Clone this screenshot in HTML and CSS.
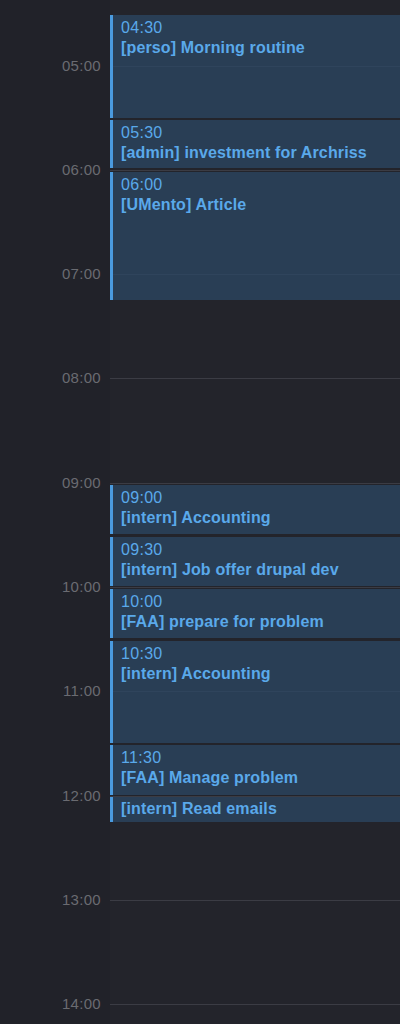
FILE: index.html
```html
<!DOCTYPE html>
<html>
<head>
<meta charset="utf-8">
<link rel="stylesheet" href="styles.css">
</head>
<body>
<div class="day">
  <div class="row first"><div class="label"></div><div class="slot"></div></div>
  <div class="row"><div class="label"><span>05:00</span></div><div class="slot"></div></div>
  <div class="row"><div class="label"><span>06:00</span></div><div class="slot"></div></div>
  <div class="row"><div class="label"><span>07:00</span></div><div class="slot"></div></div>
  <div class="row"><div class="label"><span>08:00</span></div><div class="slot"></div></div>
  <div class="row"><div class="label"><span>09:00</span></div><div class="slot"></div></div>
  <div class="row"><div class="label"><span>10:00</span></div><div class="slot"></div></div>
  <div class="row"><div class="label"><span>11:00</span></div><div class="slot"></div></div>
  <div class="row"><div class="label"><span>12:00</span></div><div class="slot"></div></div>
  <div class="row"><div class="label"><span>13:00</span></div><div class="slot"></div></div>
  <div class="row last"><div class="label"><span>14:00</span></div><div class="slot"></div></div>

  <div class="events">
    <div class="event" style="top:15px;height:103px"><div class="time">04:30</div><div class="title">[perso] Morning routine</div></div>
    <div class="event" style="top:120px;height:48px"><div class="time">05:30</div><div class="title">[admin] investment for Archriss</div></div>
    <div class="event" style="top:172px;height:128px"><div class="time">06:00</div><div class="title">[UMento] Article</div></div>
    <div class="event" style="top:485px;height:49px"><div class="time">09:00</div><div class="title">[intern] Accounting</div></div>
    <div class="event" style="top:537px;height:49px"><div class="time">09:30</div><div class="title">[intern] Job offer drupal dev</div></div>
    <div class="event" style="top:589px;height:49px"><div class="time">10:00</div><div class="title">[FAA] prepare for problem</div></div>
    <div class="event" style="top:641px;height:102px"><div class="time">10:30</div><div class="title">[intern] Accounting</div></div>
    <div class="event" style="top:745px;height:50px"><div class="time">11:30</div><div class="title">[FAA] Manage problem</div></div>
    <div class="event short" style="top:797px;height:25px"><div class="title">[intern] Read emails</div></div>
  </div>
</div>
</body>
</html>
```
FILE: styles.css
```css
html, body {
  margin: 0;
  padding: 0;
  background: #23242b;
  height: 1024px;
  overflow: hidden;
}
body {
  font-family: "Liberation Sans", Arial, sans-serif;
}
.day {
  position: relative;
  display: flex;
  flex-direction: column;
}
.row {
  display: flex;
  height: 104.3px;
  flex-shrink: 0;
}
.row.first {
  height: 65.5px;
}
.row.last {
  height: 30px;
}
.label {
  width: 110px;
  flex-shrink: 0;
  background: #212229;
  position: relative;
}
.label span {
  position: absolute;
  right: 9px;
  top: -9px;
  font-size: 15px;
  line-height: 18px;
  color: #6a6b71;
  letter-spacing: 0.3px;
}
.slot {
  flex: 1;
  border-top: 1px solid #3b3c44;
}
.row.first .slot {
  border-top: none;
}
.events {
  position: absolute;
  left: 110px;
  right: 0;
  top: 0;
}
.event {
  position: absolute;
  left: 0;
  right: 0;
  box-sizing: border-box;
  background: rgba(44, 71, 100, 0.75);
  border-left: 3px solid #4a9be0;
  padding: 3px 8px 0 8px;
  color: #5aa9ea;
  font-size: 16px;
  line-height: 20px;
  overflow: hidden;
}
.event.short {
  padding-top: 2px;
}
.time {
  font-weight: normal;
  letter-spacing: 0.3px;
}
.title {
  font-weight: bold;
  letter-spacing: 0.15px;
}
```
